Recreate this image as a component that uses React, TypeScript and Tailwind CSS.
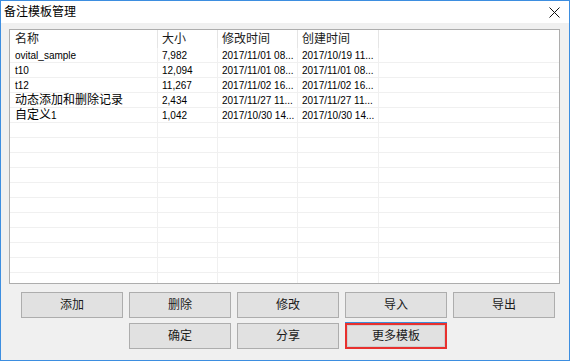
import React from "react"

const rows = [
  { name: "ovital_sample", size: "7,982", mod: "2017/11/01 08...", created: "2017/10/19 11..." },
  { name: "t10", size: "12,094", mod: "2017/11/01 08...", created: "2017/11/01 08..." },
  { name: "t12", size: "11,267", mod: "2017/11/02 16...", created: "2017/11/02 16..." },
  { name: "动态添加和删除记录", size: "2,434", mod: "2017/11/27 11...", created: "2017/11/27 11..." },
  { name: "自定义1", size: "1,042", mod: "2017/10/30 14...", created: "2017/10/30 14..." },
]

const cjk = "font-['Liberation_Sans','Noto_Sans_CJK_SC',sans-serif]"

// CJK glyphs render a bit larger than the latin ones in the list
function Name({ text }: { text: string }) {
  const parts = text.match(/[\u4e00-\u9fff]+|[^\u4e00-\u9fff]+/g) ?? []
  return (
    <>
      {parts.map((p, i) =>
        /[\u4e00-\u9fff]/.test(p) ? (
          <span key={i} className="text-[12px]">{p}</span>
        ) : (
          <span key={i}>{p}</span>
        )
      )}
    </>
  )
}

function Btn({ label, highlight }: { label: string; highlight?: boolean }) {
  if (highlight) {
    return (
      <div className="h-[26px] border-2 border-[#e8302e] bg-[#e1e1e1] shadow-[0_-1px_0_#3c8fd8,inset_0_0_0_1px_#cfcfcf] flex items-center justify-center text-[12px] text-[#1a1a1a]">
        {label}
      </div>
    )
  }
  return (
    <div className="h-[26px] border border-[#adadad] bg-[#e1e1e1] flex items-center justify-center text-[12px] text-[#1a1a1a]">
      {label}
    </div>
  )
}

export default function App() {
  const empty = Array.from({ length: 13 })
  return (
    <div className={`w-[570px] h-[361px] border border-[#3d8ee0] flex flex-col bg-[#f0f0f0] overflow-hidden ${cjk}`}>
      {/* Title bar */}
      <div className="h-[22px] bg-white flex items-center justify-between pl-[3px] pr-[9px] shrink-0">
        <span className="text-[12px] text-black">备注模板管理</span>
        <svg width="11" height="11" viewBox="0 0 11 11">
          <path d="M0.5 0.5 L10.5 10.5 M10.5 0.5 L0.5 10.5" stroke="#111" strokeWidth="1" />
        </svg>
      </div>

      {/* Body */}
      <div className="flex-1 flex flex-col pl-[8px] pr-[9px] pt-[6px]">
        <div className="h-[255px] border border-[#adadad] bg-white overflow-hidden">
          {/* Header */}
          <div className="flex h-[18px] text-[12px] text-[#1a1a1a]">
            <div className="w-[148px] pl-[5px] border-r border-[#e5e5e5] flex items-center">名称</div>
            <div className="w-[60px] pl-[4px] border-r border-[#e5e5e5] flex items-center">大小</div>
            <div className="w-[80px] pl-[4px] border-r border-[#e5e5e5] flex items-center">修改时间</div>
            <div className="w-[81px] pl-[4px] border-r border-[#e5e5e5] flex items-center">创建时间</div>
            <div className="flex-1" />
          </div>
          {/* Rows */}
          {rows.map((r) => (
            <div key={r.name} className="flex h-[15px] border-b border-[#f0f0f0] text-[10px] text-black">
              <div className="w-[148px] pl-[5px] border-r border-[#f0f0f0] flex items-center whitespace-nowrap">
                <Name text={r.name} />
              </div>
              <div className="w-[60px] pl-[4px] border-r border-[#f0f0f0] flex items-center">{r.size}</div>
              <div className="w-[80px] pl-[4px] border-r border-[#f0f0f0] flex items-center whitespace-nowrap">{r.mod}</div>
              <div className="w-[81px] pl-[4px] border-r border-[#f0f0f0] flex items-center whitespace-nowrap">{r.created}</div>
              <div className="flex-1" />
            </div>
          ))}
          {empty.map((_, i) => (
            <div key={i} className="flex h-[15px] border-b border-[#f0f0f0]">
              <div className="w-[148px] border-r border-[#f0f0f0]" />
              <div className="w-[60px] border-r border-[#f0f0f0]" />
              <div className="w-[80px] border-r border-[#f0f0f0]" />
              <div className="w-[81px] border-r border-[#f0f0f0]" />
              <div className="flex-1" />
            </div>
          ))}
        </div>

        {/* Buttons */}
        <div className="ml-[12px] mt-[8px] grid grid-cols-[repeat(5,102px)] gap-x-[6px] gap-y-[5px]">
          <Btn label="添加" />
          <Btn label="删除" />
          <Btn label="修改" />
          <Btn label="导入" />
          <Btn label="导出" />
          <div />
          <Btn label="确定" />
          <Btn label="分享" />
          <Btn label="更多模板" highlight />
        </div>
      </div>
    </div>
  )
}
